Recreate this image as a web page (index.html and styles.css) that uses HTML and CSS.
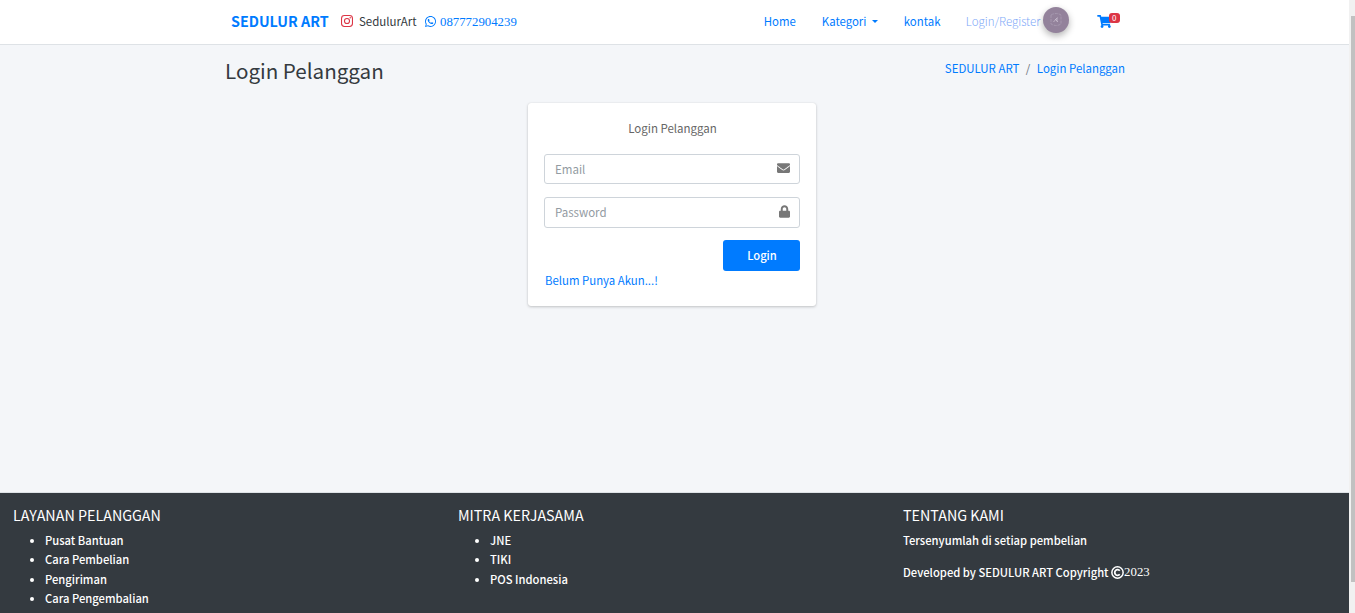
FILE: index.html
```html
<!DOCTYPE html>
<html lang="id">
<head>
<meta charset="utf-8">
<title>Login Pelanggan</title>
<link rel="stylesheet" href="styles.css">
</head>
<body>
<div class="page">
  <header class="navbar">
    <div class="container nav-inner">
      <a class="brand">SEDULUR ART</a>
      <a class="social ig">
        <svg class="ico-ig" viewBox="0 0 448 448"><path fill="none" stroke="#dc3545" stroke-width="40" d="M130 20h188a110 110 0 0 1 110 110v188a110 110 0 0 1-110 110H130A110 110 0 0 1 20 318V130A110 110 0 0 1 130 20z"/><circle cx="224" cy="224" r="95" fill="none" stroke="#dc3545" stroke-width="40"/><circle cx="344" cy="104" r="27" fill="#dc3545"/></svg>
        <span>SedulurArt</span></a>
      <a class="social wa">
        <svg class="ico-wa" viewBox="0 0 448 512"><path fill="#007bff" d="M380.900 97.100C339 55.100 283.200 32 223.900 32c-122.400 0-222 99.600-222 222 0 39.100 10.200 77.300 29.600 111L0 480l117.700-30.900c32.400 17.700 68.900 27 106.100 27h.1c122.300 0 224.100-99.600 224.100-222 0-59.300-25.200-115-67.100-157zm-157 341.600c-33.200 0-65.700-8.900-94-25.700l-6.700-4-69.800 18.300L72 359.200l-4.400-7c-18.500-29.400-28.200-63.300-28.200-98.200 0-101.700 82.800-184.500 184.600-184.500 49.300 0 95.600 19.200 130.400 54.100 34.800 34.900 56.200 81.200 56.100 130.500 0 101.800-84.900 184.600-186.600 184.600zm101.200-138.200c-5.500-2.800-32.800-16.200-37.900-18-5.100-1.900-8.800-2.800-12.500 2.800-3.700 5.600-14.300 18-17.600 21.800-3.200 3.700-6.500 4.200-12 1.400-32.600-16.300-54-29.100-75.500-66-5.700-9.800 5.700-9.100 16.300-30.300 1.800-3.700.9-6.900-.5-9.700-1.400-2.800-12.500-30.100-17.100-41.200-4.500-10.800-9.100-9.300-12.500-9.500-3.200-.2-6.900-.2-10.600-.2-3.700 0-9.700 1.400-14.800 6.900-5.100 5.600-19.400 19-19.400 46.300 0 27.300 19.900 53.700 22.600 57.400 2.800 3.700 39.100 59.700 94.800 83.800 35.200 15.200 49 16.500 66.600 13.900 10.700-1.600 32.800-13.400 37.400-26.400 4.600-13 4.600-24.100 3.200-26.400-1.300-2.500-5-3.900-10.500-6.600z"/></svg>
        <span>087772904239</span></a>
      <nav class="menu">
        <a class="m-home">Home</a>
        <a class="m-kat">Kategori<i class="caret"></i></a>
        <a class="m-kontak">kontak</a>
        <a class="m-login">Login/Register</a>
        <span class="avatar"><svg viewBox="0 0 26 26"><path fill="none" stroke="#aa9db2" stroke-width=".8" stroke-dasharray="3 1" d="M8 8q5-3 10 0v9q-5 3-10 0z"/><path fill="none" stroke="#c9bfcf" stroke-width=".8" d="M10.500 15l4-4.500M12 12l3 3M14 11v3.500"/></svg></span>
        <a class="cart"><svg viewBox="0 0 576 512"><path fill="#007bff" d="M528.100 301.300l47.300-208C578.800 78.300 567.400 64 552 64H159.200l-9.200-44.800C147.800 8 137.900 0 126.500 0H24C10.700 0 0 10.700 0 24v16c0 13.300 10.700 24 24 24h69.900l70.200 343.400C147.300 417.100 136 435.200 136 456c0 30.900 25.100 56 56 56s56-25.100 56-56c0-15.700-6.400-29.800-16.800-40h209.600C430.400 426.200 424 440.300 424 456c0 30.900 25.100 56 56 56s56-25.100 56-56c0-22.200-12.900-41.300-31.600-50.400l5.500-24.300c3.400-15-8-29.300-23.400-29.300H218.100l-6.500-32h293.100c11.200 0 20.900-7.800 23.400-18.700z"/></svg><b class="badge">0</b></a>
      </nav>
    </div>
  </header>
  <main class="content">
    <div class="container head">
      <h1>Login Pelanggan</h1>
      <div class="crumbs"><a>SEDULUR ART</a><i>/</i><a>Login Pelanggan</a></div>
    </div>
    <section class="card">
      <p class="msg">Login Pelanggan</p>
      <div class="field"><span>Email</span><svg class="mail" viewBox="0 0 512 384"><path fill="#777" d="M502.300 126.800c3.900-3.100 9.700-.2 9.700 4.700V336c0 26.500-21.500 48-48 48H48c-26.500 0-48-21.500-48-48V131.600c0-5 5.700-7.800 9.700-4.700 22.400 17.400 52.100 39.500 154.100 113.600 21.100 15.400 56.700 47.800 92.200 47.600 35.700.3 72-32.800 92.300-47.600 102-74.100 131.600-96.300 154-113.700zM256 256c23.200.4 56.600-29.200 73.400-41.400 132.700-96.300 142.800-104.700 173.400-128.700 5.800-4.500 9.200-11.500 9.200-18.900V48c0-26.500-21.500-48-48-48H48C21.500 0 0 21.500 0 48v19c0 7.400 3.400 14.300 9.200 18.900 30.600 23.900 40.700 32.400 173.400 128.700 16.800 12.200 50.200 41.800 73.400 41.400z"/></svg></div>
      <div class="field pass"><span>Password</span><svg class="lock" viewBox="0 0 448 512"><path fill="#777" d="M400 224h-24v-72C376 68.200 307.800 0 224 0S72 68.200 72 152v72H48c-26.500 0-48 21.500-48 48v192c0 26.500 21.500 48 48 48h352c26.500 0 48-21.500 48-48V272c0-26.500-21.500-48-48-48zm-104 0H152v-72c0-39.700 32.300-72 72-72s72 32.300 72 72v72z"/></svg></div>
      <button class="btn">Login</button>
      <a class="reg">Belum Punya Akun...!</a>
    </section>
  </main>
  <footer class="footer">
    <div class="col"><h5>LAYANAN PELANGGAN</h5><ul><li>Pusat Bantuan</li><li>Cara Pembelian</li><li>Pengiriman</li><li>Cara Pengembalian</li></ul></div>
    <div class="col"><h5>MITRA KERJASAMA</h5><ul><li>JNE</li><li>TIKI</li><li>POS Indonesia</li></ul></div>
    <div class="col"><h5>TENTANG KAMI</h5><p>Tersenyumlah di setiap pembelian</p><p class="copy">Developed by SEDULUR ART Copyright <svg class="cc" viewBox="0 0 26 26"><circle cx="13" cy="13" r="11.300" fill="none" stroke="#fff" stroke-width="3"/><path fill="none" stroke="#fff" stroke-width="3.600" d="M17.500 9.500a5.600 5.600 0 1 0 0 7"/></svg><span class="year">2023</span></p></div>
  </footer>
</div>
<div class="scroll"><i class="thumb"></i></div>
</body>
</html>
```
FILE: styles.css
```css
* { box-sizing: border-box; }
body { margin: 0; height: 613px; overflow: hidden; display: flex; background: #f4f6f9; color: #212529; font: 400 11.5px/19.2px "Noto Sans CJK SC", "Noto Sans", sans-serif; }
a { color: #007bff; white-space: nowrap; }
svg { display: block; flex: none; }
h1, h5, p, ul { margin: 0; font-weight: 400; }
.page { width: 1349px; height: 613px; display: flex; flex-direction: column; }
.container { width: 900px; margin-left: 225px; }
.navbar { height: 45px; flex: none; background: #fff; border-bottom: 1px solid #dee2e6; }
.nav-inner { display: flex; align-items: center; height: 43px; padding-left: 6px; }
.brand { font-size: 14.3px; font-weight: 700; width: 110px; line-height: 19px; padding-bottom: 2px; }
.social { display: flex; align-items: center; }
.ig { width: 84px; color: #343a40; gap: 6px; }
.wa { gap: 4px; }
.wa span { font: 12.8px/19px "Liberation Serif", serif; padding-top: 1px; }
.ico-ig { width: 12px; height: 12px; }
.ico-wa { width: 11px; height: 13px; }
.menu { display: flex; align-items: center; flex: 1; margin-left: 247px; font-size: 11.4px; height: 43px; }
.m-home { width: 58px; }
.m-kat { width: 82px; display: flex; align-items: center; }
.caret { border: 3.5px solid transparent; border-top-color: #007bff; border-bottom: 0; margin-left: 6px; }
.m-kontak { width: 62px; }
.m-login { width: 77px; color: #80a9f8; font-size: 11.5px; font-weight: 300; }
.avatar { width: 26px; height: 26px; border-radius: 50%; background: #93829b; box-shadow: 0 3px 7px rgba(0,0,0,.3); margin-top: -4px; }
.cart { margin-left: 28px; position: relative; }
.cart svg { width: 15px; height: 13px; margin-top: -1px; }
.badge { position: absolute; left: 12px; top: -3px; width: 11px; height: 10px; border-radius: 3px; background: #dc3545; color: #fff; font: 400 8px/10px "Noto Sans CJK SC", sans-serif; text-align: center; }
.content { height: 447px; flex: none; }
.head { display: flex; justify-content: space-between; height: 58px; padding-top: 11px; }
h1 { font-size: 20.6px; line-height: 28px; color: #343a40; }
.crumbs { display: flex; padding-top: 3px; font-size: 11.45px; }
.crumbs i { font-style: normal; color: #6c757d; margin: 0 6.500px; }
.card { width: 288px; height: 203px; margin-left: 528px; padding: 16px; background: #fff; border-radius: 3px; box-shadow: 0 0 1px rgba(0,0,0,.13), 0 1px 3px rgba(0,0,0,.2); display: flex; flex-direction: column; }
.msg { text-align: center; color: #666; height: 35px; padding-left: 1px; }
.field { flex: none; height: 30px; margin-bottom: 13px; border: 1px solid #ced4da; border-radius: 3px; padding: 1px 9px 0 10px; display: flex; align-items: center; justify-content: space-between; color: #939ba2; }
.pass { height: 31px; margin-bottom: 12px; }
.mail { width: 13px; height: 10px; margin-top: -3px; }
.lock { width: 11px; height: 13px; margin-top: -3px; }
.btn { align-self: flex-end; flex: none; width: 77px; height: 31px; border: 0; border-radius: 3px; background: #007bff; color: #fff; font: inherit; font-size: 11.2px; font-weight: 500; padding: 0 0 0 1px; }
.reg { padding-left: 1px; line-height: 19px; font-size: 11.4px; }
.footer { flex: 1; display: grid; grid-template-columns: 445px 445px 1fr; padding: 12px 13px 0; background: #343a40; color: #fff; font-weight: 500; font-size: 11.23px; border-top: 1px solid #dee2e6; }
.footer p { font-weight: 500; }
h5 { font-size: 14.3px; line-height: 19px; margin-bottom: 7px; }
ul { padding-left: 32px; line-height: 19.4px; font-weight: 500; }
.copy { margin-top: 13px; display: flex; align-items: center; white-space: pre; }
.cc { width: 13px; height: 13px; margin-top: -1px; }
.year { font: 12.8px/19px "Liberation Serif", serif; }
.scroll { width: 6px; background: #f1f1f1; padding: 16px 0 0 2px; }
.thumb { display: block; height: 566px; background: #c1c1c1; }
```
